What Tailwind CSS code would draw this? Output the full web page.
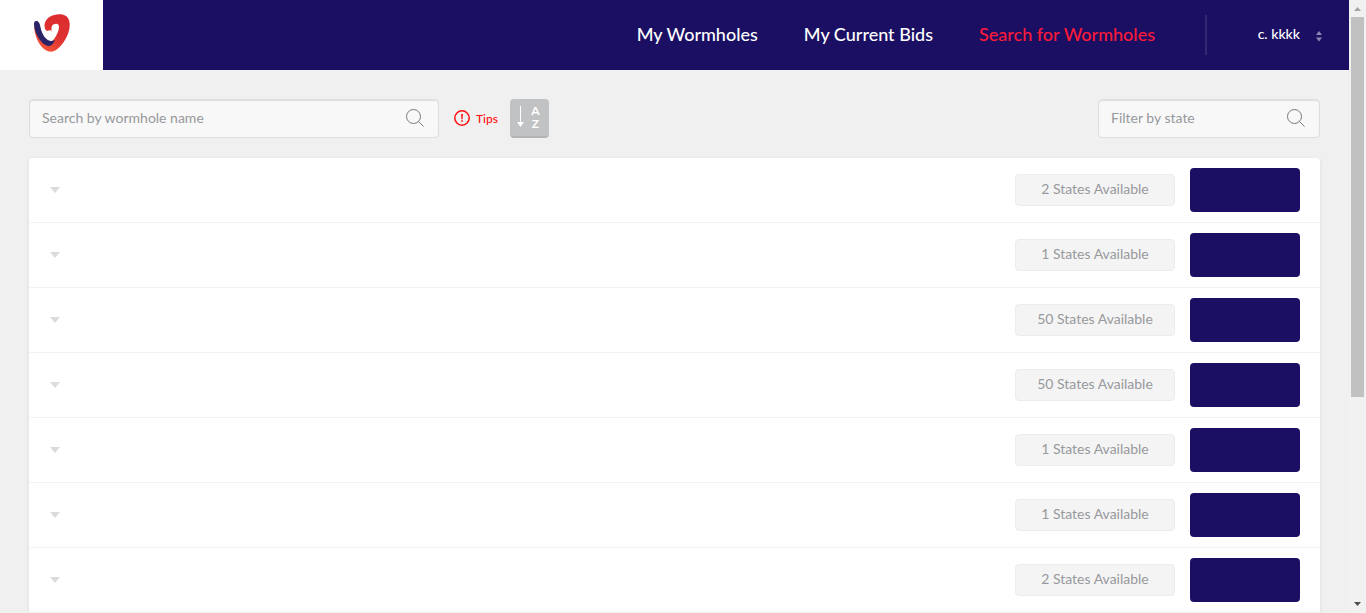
<!DOCTYPE html>
<html lang="en">
<head>
<meta charset="utf-8">
<title>Search for Wormholes</title>
<script src="https://cdn.jsdelivr.net/npm/@tailwindcss/browser@4"></script>
</head>
<body class="flex h-screen overflow-hidden bg-[#f0f0f0] font-['Lato','Open_Sans',sans-serif] text-sm text-[#97999c]">
<svg class="hidden">
  <symbol id="search" viewBox="0 0 18 18"><g fill="none" stroke="#77797b"><circle cx="7.5" cy="7.5" r="7"/><path d="M12.5 12.5L17.5 17.5"/></g></symbol>
  <symbol id="caret" viewBox="0 0 10 6"><path fill="#dadbdd" d="M0 0H10L5 6Z"/></symbol>
</svg>
<div class="flex min-w-0 flex-1 flex-col">
  <header class="flex h-[70px] shrink-0 items-stretch bg-[#1b0f63]">
    <a href="#" aria-label="Home" class="flex w-[103px] items-center justify-center bg-white pb-1">
      <svg class="h-[38px] w-9" viewBox="43 28 108 114">
        <defs><linearGradient id="g" x1="1" y1="0" x2="0.2" y2="1"><stop offset="0" stop-color="#dc2b30"/><stop offset="0.5" stop-color="#dd3030"/><stop offset="1" stop-color="#f9593a"/></linearGradient></defs>
        <path fill="url(#g)" d="M96 82C95 77 90 75 84 79C77 78 73 70 75 57C80 39 98 28 122 29C142 30 151 43 150 63C149 90 130 122 108 137C98 143 86 142 76 135C56 120 44 92 43 60C46 74 60 98 70 106C80 113 95 114 101 106C110 94 118 78 118 66C118 57 110 55 102 59C96 62 94 70 96 82Z"/>
        <path fill="#2a2367" d="M43 58C43 49 48 47 54 50C60 54 61 62 63 70C66 84 74 100 86 107C92 110 98 110 106 106C100 121 90 128 79 122C61 113 44 84 43 58Z"/>
      </svg>
    </a>
    <nav class="flex flex-1 items-center justify-end gap-[46px] pr-[50px] pb-0.5 text-lg font-medium text-white">
      <a href="#">My Wormholes</a>
      <a href="#">My Current Bids</a>
      <a href="#" class="text-[#fb1a38]">Search for Wormholes</a>
    </nav>
    <div class="my-[15px] w-0.5 bg-[#34296f]"></div>
    <button class="flex w-[142px] items-center justify-end gap-4 pr-[27px] pb-0.5 text-sm font-medium text-white">
      c. kkkk
      <svg class="mt-1 h-3 w-[6px]" viewBox="0 0 6 12"><path fill="#8d87b1" d="M0 5L3 1L6 5ZM0 7.500L3 11.500L6 7.500Z"/></svg>
    </button>
  </header>
  <main class="px-[29px] pt-[29px]">
    <div class="mb-5 flex h-[39px] items-center">
      <label class="flex h-full w-[410px] items-center rounded border border-[#dedede] bg-[#f8f8f8] pr-[14px] pb-px pl-3 shadow-[inset_0_1px_1px_#dedede]">
        <input type="text" aria-label="Search by wormhole name" placeholder="Search by wormhole name" class="min-w-0 flex-1 bg-transparent outline-none placeholder:text-[#97999c]">
        <svg class="size-[18px]"><use href="#search"/></svg>
      </label>
      <a href="#" class="ml-[15px] flex items-center gap-1.5 text-xs font-medium text-[#ff1010]">
        <svg class="mb-0.5 size-4" viewBox="0 0 16 16"><circle cx="8" cy="8" r="7.200" fill="none" stroke="#ff1010" stroke-width="1.500"/><path fill="#ff1010" d="M7.100 4H8.900L8.600 9.300H7.400ZM7.200 10.200H8.800V11.800H7.200Z"/></svg>
        Tips
      </a>
      <button aria-label="Sort A to Z" class="ml-3 flex h-full w-[39px] items-center justify-center gap-0.5 rounded border-b-2 border-[#b3b4b6] bg-[#c1c2c4] pb-px pl-0.5 text-xs font-bold text-white">
        <svg class="h-[22px] w-2" viewBox="0 0 8 22"><path stroke="#fff" d="M3.500 0V17"/><path fill="#fff" d="M0 16H7L3.500 21Z"/></svg>
        <span class="flex w-4 flex-col items-center leading-[13px]"><span>A</span><span>Z</span></span>
      </button>
      <label class="ml-auto flex h-full w-[222px] items-center rounded border border-[#dedede] bg-[#f8f8f8] pr-[14px] pb-px pl-3 shadow-[inset_0_1px_1px_#dedede]">
        <input type="text" aria-label="Filter by state" placeholder="Filter by state" class="min-w-0 flex-1 bg-transparent outline-none placeholder:text-[#97999c]">
        <svg class="size-[18px]"><use href="#search"/></svg>
      </label>
    </div>
    <ul class="rounded-t bg-white shadow-[0_1px_4px_rgba(0,0,0,0.08)]">
      <li class="flex h-[65px] items-center border-b border-[#f2f2f2] pr-5 pl-[21px]"><button aria-label="Expand row"><svg class="h-1.5 w-2.5"><use href="#caret"/></svg></button><span class="ml-auto flex h-8 w-40 items-center justify-center rounded border border-[#ececec] bg-[#f4f4f4] pb-0.5">2 States Available</span><button aria-label="Open" class="ml-[15px] h-11 w-[110px] rounded bg-[#1b0f63]"></button></li>
      <li class="flex h-[65px] items-center border-b border-[#f2f2f2] pr-5 pl-[21px]"><button aria-label="Expand row"><svg class="h-1.5 w-2.5"><use href="#caret"/></svg></button><span class="ml-auto flex h-8 w-40 items-center justify-center rounded border border-[#ececec] bg-[#f4f4f4] pb-0.5">1 States Available</span><button aria-label="Open" class="ml-[15px] h-11 w-[110px] rounded bg-[#1b0f63]"></button></li>
      <li class="flex h-[65px] items-center border-b border-[#f2f2f2] pr-5 pl-[21px]"><button aria-label="Expand row"><svg class="h-1.5 w-2.5"><use href="#caret"/></svg></button><span class="ml-auto flex h-8 w-40 items-center justify-center rounded border border-[#ececec] bg-[#f4f4f4] pb-0.5">50 States Available</span><button aria-label="Open" class="ml-[15px] h-11 w-[110px] rounded bg-[#1b0f63]"></button></li>
      <li class="flex h-[65px] items-center border-b border-[#f2f2f2] pr-5 pl-[21px]"><button aria-label="Expand row"><svg class="h-1.5 w-2.5"><use href="#caret"/></svg></button><span class="ml-auto flex h-8 w-40 items-center justify-center rounded border border-[#ececec] bg-[#f4f4f4] pb-0.5">50 States Available</span><button aria-label="Open" class="ml-[15px] h-11 w-[110px] rounded bg-[#1b0f63]"></button></li>
      <li class="flex h-[65px] items-center border-b border-[#f2f2f2] pr-5 pl-[21px]"><button aria-label="Expand row"><svg class="h-1.5 w-2.5"><use href="#caret"/></svg></button><span class="ml-auto flex h-8 w-40 items-center justify-center rounded border border-[#ececec] bg-[#f4f4f4] pb-0.5">1 States Available</span><button aria-label="Open" class="ml-[15px] h-11 w-[110px] rounded bg-[#1b0f63]"></button></li>
      <li class="flex h-[65px] items-center border-b border-[#f2f2f2] pr-5 pl-[21px]"><button aria-label="Expand row"><svg class="h-1.5 w-2.5"><use href="#caret"/></svg></button><span class="ml-auto flex h-8 w-40 items-center justify-center rounded border border-[#ececec] bg-[#f4f4f4] pb-0.5">1 States Available</span><button aria-label="Open" class="ml-[15px] h-11 w-[110px] rounded bg-[#1b0f63]"></button></li>
      <li class="flex h-[65px] items-center border-b border-[#f2f2f2] pr-5 pl-[21px]"><button aria-label="Expand row"><svg class="h-1.5 w-2.5"><use href="#caret"/></svg></button><span class="ml-auto flex h-8 w-40 items-center justify-center rounded border border-[#ececec] bg-[#f4f4f4] pb-0.5">2 States Available</span><button aria-label="Open" class="ml-[15px] h-11 w-[110px] rounded bg-[#1b0f63]"></button></li>
    </ul>
  </main>
</div>
<div aria-hidden="true" class="flex w-[17px] shrink-0 flex-col items-center bg-[#f1f1f1]">
  <svg class="h-[17px] w-[17px] shrink-0" viewBox="0 0 17 17"><path fill="#a3a3a3" d="M5 11H12L8.500 7Z"/></svg>
  <div class="h-[380px] w-[13px] bg-[#c1c1c1]"></div>
  <svg class="mt-auto h-[17px] w-[17px] shrink-0" viewBox="0 0 17 17"><path fill="#505050" d="M5 6H12L8.500 10Z"/></svg>
</div>
</body>
</html>
